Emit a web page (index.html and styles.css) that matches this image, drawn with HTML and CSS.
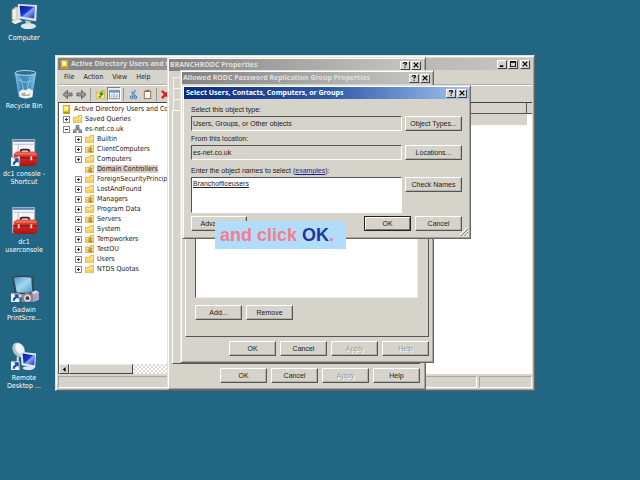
FILE: index.html
```html
<!DOCTYPE html>
<html lang="en">
<head>
<meta charset="utf-8">
<title>Active Directory Users and Computers</title>
<link rel="stylesheet" href="styles.css">
</head>
<body>
<svg class="defs" aria-hidden="true">
  <defs>
    <linearGradient id="screen" x1="0" y1="0" x2="1" y2="1"><stop offset="0" stop-color="#0a1c9c"/><stop offset=".45" stop-color="#1a35d8"/><stop offset=".55" stop-color="#8aa8f4"/><stop offset="1" stop-color="#1428b4"/></linearGradient>
    <linearGradient id="glass" x1="0" y1="0" x2="1" y2="1"><stop offset="0" stop-color="#4a98cc"/><stop offset=".5" stop-color="#a4d6f0"/><stop offset="1" stop-color="#4e9cd0"/></linearGradient>
    <linearGradient id="bin" x1="0" y1="0" x2="1" y2="0"><stop offset="0" stop-color="#8cc4e4"/><stop offset=".3" stop-color="#3a88b8"/><stop offset=".7" stop-color="#4a98c8"/><stop offset="1" stop-color="#9ccce8"/></linearGradient>
    <linearGradient id="red" x1="0" y1="0" x2="0" y2="1"><stop offset="0" stop-color="#ee5a4c"/><stop offset=".4" stop-color="#d42a24"/><stop offset="1" stop-color="#a81414"/></linearGradient>
    <symbol id="i-arrow" viewBox="0 0 9 9"><path fill="#f0f4fa" d="M0 0h9v9H0z"/><path fill="#1c4ca4" d="M3 1h5v5L6.500 4.500Q4 6 3.500 8L1.500 7.500Q2 4.500 4.700 2.800z"/></symbol>
    <symbol id="i-toolbox" viewBox="0 0 30 30"><path fill="#f4f6fa" stroke="#a4b0c4" d="M2.500 1.500h23v26h-23z"/><path fill="#5c84bc" d="M3 2h22v2H3z"/><path stroke="#b4bccb" d="M4 6.500h20M8.500 7v18"/><path fill="none" stroke="#33201c" stroke-width="2" d="M11 16v-2q0-2 2-2h5q2 0 2 2v2"/><path fill="url(#red)" d="M4 16l3-2h18l3 2v11l-3 2H5l-2-2z"/><path fill="#f48b7c" d="M5 16h22v1H5z"/><path stroke="#7c0c0c" d="M3 20.500h25"/><path fill="#ded6cc" d="M8 19h2v4H8zM21 19h2v4h-2z"/></symbol>
    <symbol id="i-folder" viewBox="0 0 10 10"><path fill="#e2b94c" d="M0 2h5l1-2h4v9H0z"/><path fill="#ffe48c" d="M1 3h5l1-2h2v7H1z"/><path fill="#f6d067" d="M1 5h8v3H1z"/></symbol>
    <symbol id="i-ou" viewBox="0 0 10 10"><use href="#i-folder"/><path fill="#8c6c20" d="M4 3h4v1H4zM3 5h2v1H3zM6 4h1v3H6zM4 7h4v1H4z"/></symbol>
    <symbol id="i-console" viewBox="0 0 10 10"><path fill="#d9a91c" d="M1 0h8v10H1z"/><path fill="#ffe75c" d="M2 1h5v6H2z"/><path fill="#fff9c4" d="M3 2h4v3H3z"/><path fill="#a88418" d="M2 8h6v1H2z"/></symbol>
    <symbol id="i-domain" viewBox="0 0 10 10"><path fill="#6b7c8c" d="M3 0h4v4H3zM0 5h4v4H0zM6 5h4v4H6z"/><path fill="#bed4e2" d="M4 1h2v1H4zM1 6h2v1H1zM7 6h2v1H7z"/><path stroke="#485868" d="M5 4v2M2 4.500h6"/></symbol>
    <symbol id="i-help" viewBox="0 0 7 7"><path fill="none" stroke="#000" stroke-width="1.300" d="M1.700 2V1.500Q1.700.7 3.500.7t1.800 1Q5.300 2.400 4.200 3 3.500 3.300 3.500 4.400"/><path d="M2.800 5.400h1.500v1.300H2.800z"/></symbol>
    <symbol id="i-close" viewBox="0 0 7 7"><path stroke="#000" stroke-width="1.400" d="M.8.8l5.400 5.400M6.200.8L.8 6.200"/></symbol>
  </defs>
</svg>

<main class="desktop">
  <nav class="shortcuts" aria-label="Desktop">
    <a class="shortcut" href="#"><svg viewBox="0 0 30 30"><path fill="#d8d6c6" stroke="#9c9c8c" stroke-width=".5" d="M2 8l4-3 4 1v13l-5 2-3-3z"/><path fill="#f4f2e4" d="M3 9l3-2v11l-3-1z"/><path fill="#dce4ec" d="M8 2l20 1-1 17-18-3z"/><path fill="url(#screen)" d="M10 4l16 1-1 12-14-2z"/><path fill="#b8c2cc" d="M16 19l5 1 1 4h-6z"/><ellipse cx="19" cy="25" rx="8" ry="3" fill="#dfe6ec"/><path fill="#eceae0" d="M1 20l9-2 3 2-8 3z"/></svg><span>Computer</span></a>
    <a class="shortcut" href="#"><svg viewBox="0 0 30 30"><path fill="url(#bin)" d="M5 3h22l-4 25q-7 3-14 0z"/><ellipse cx="16" cy="3" rx="11" ry="2.500" fill="#2c7094" stroke="#b4dcf0"/><path fill="#eef2f6" d="M9 23l4-3 3 1 4-2 4 3-1 6q-7 3-13 0z"/><path fill="#b9aaa0" d="M11 25l4-2 2 3 4-2-1 3h-7z"/><path fill="none" stroke="#a4d4ec" stroke-width=".8" d="M11 8l3 12M21 7l-3 12M9 10q7 5 14 1"/></svg><span>Recycle Bin</span></a>
    <a class="shortcut" href="#"><svg viewBox="0 0 30 30"><use href="#i-toolbox"/><use href="#i-arrow" x="1" y="20" width="9" height="9"/></svg><span>dc1 console - Shortcut</span></a>
    <a class="shortcut" href="#"><svg viewBox="0 0 30 30"><use href="#i-toolbox"/></svg><span>dc1 userconsole</span></a>
    <a class="shortcut" href="#"><svg viewBox="0 0 30 30"><path fill="#34454f" d="M2 3q10-3 22 0l1 17q-10 3-20 1z"/><path fill="url(#glass)" d="M4 4q9-2 18 0l1 14q-9 2-16 1z"/><path fill="#cfd6dc" d="M9 21h10v3H9z"/><path fill="#a9a4c6" d="M22 19l5-2 3 2v8l-6 2z"/><path fill="#dad5e4" d="M22 19l5-2 3 2-5 2z"/><path fill="#8a8890" d="M12 21h3l1-2h4l1 2h3v8H12z"/><circle cx="18" cy="25" r="3.500" fill="#e0dce4"/><circle cx="18" cy="25" r="2" fill="#4c3c50"/><use href="#i-arrow" x="1" y="20" width="9" height="9"/></svg><span>Gadwin PrintScre...</span></a>
    <a class="shortcut" href="#"><svg viewBox="0 0 30 30"><ellipse cx="9" cy="8" rx="6" ry="8" transform="rotate(-30 9 8)" fill="#b2c6d0"/><ellipse cx="10" cy="7" rx="4" ry="6" transform="rotate(-30 10 7)" fill="#eef6fa"/><path stroke="#dce4e8" stroke-width="2" d="M8 15v6"/><path fill="#e0e6ea" d="M11 10l16 2-1 15-14-3z"/><path fill="url(#screen)" d="M13 12l13 2-1 10-11-2z"/><ellipse cx="19" cy="27" rx="6" ry="2" fill="#dfe6ec"/><use href="#i-arrow" x="1" y="20" width="9" height="9"/></svg><span>Remote Desktop ...</span></a>
  </nav>

  <section class="window console" aria-label="Active Directory Users and Computers">
    <header class="titlebar inactive">
      <svg class="ico"><use href="#i-console"/></svg>
      <h1>Active Directory Users and Computers</h1>
      <button class="cap" aria-label="Minimize"><svg viewBox="0 0 7 7"><path d="M1 5h4v2H1z"/></svg></button>
      <button class="cap" aria-label="Maximize"><svg viewBox="0 0 7 7"><path d="M0 0h7v7H0zM1 2v4h5V2z" fill-rule="evenodd"/></svg></button>
      <button class="cap last" aria-label="Close"><svg><use href="#i-close"/></svg></button>
    </header>
    <nav class="menubar"><a href="#">File</a><a href="#">Action</a><a href="#">View</a><a href="#">Help</a></nav>
    <div class="toolbar">
      <button aria-label="Back"><svg viewBox="0 0 12 12"><path fill="#969696" stroke="#606060" d="M1 6l5-4.500v3h5v3H6v3z"/></svg></button>
      <button aria-label="Forward"><svg viewBox="0 0 12 12"><path fill="#969696" stroke="#606060" d="M11 6L6 1.500v3H1v3h5v3z"/></svg></button>
      <i class="sep"></i>
      <button aria-label="Up one level"><svg viewBox="0 0 12 12"><path fill="#dfb643" d="M1 3h5l1-2h4v10H1z"/><path fill="#fbe58d" d="M2 4h8v6H2z"/><path fill="none" stroke="#249c24" stroke-width="1.500" d="M4 9q3 0 3-4M5 6l2-2 2 2"/></svg></button>
      <button class="pressed" aria-label="Show tree"><svg viewBox="0 0 12 12"><path fill="#fff" stroke="#7088a4" d="M.5 1.500h11v9H.5z"/><path fill="#6a92cc" d="M1 2h10v2H1z"/><path stroke="#7c92b0" d="M5.500 4v6M2 6.500h2M2 8.500h2M7 6.500h3M7 8.500h3"/></svg></button>
      <i class="sep"></i>
      <button aria-label="Cut"><svg viewBox="0 0 12 12"><path stroke="#4a98d4" stroke-width="1.500" d="M8 1L5 7M4 3l4 5"/><circle cx="4" cy="9" r="1.500" fill="none" stroke="#1a64b4"/><circle cx="8" cy="9" r="1.500" fill="none" stroke="#1a64b4"/></svg></button>
      <button aria-label="Paste"><svg viewBox="0 0 12 12"><path fill="#9a6438" d="M2 2h8v9H2z"/><path fill="#fafafa" d="M3 3h6v7H3z"/><path fill="#6c6c6c" d="M4 1h4v2H4z"/></svg></button>
      <i class="sep"></i>
      <button aria-label="Delete"><svg viewBox="0 0 12 12"><path stroke="#dc1c1c" stroke-width="2.500" d="M1 2l8 8M9 2l-8 8"/></svg></button>
    </div>
    <div class="panes">
      <div class="treepane">
        <ul class="tree">
          <li class="l0"><svg class="ico"><use href="#i-console"/></svg><span>Active Directory Users and Computers</span></li>
          <li class="l1"><b class="box plus"></b><svg class="ico"><use href="#i-folder"/></svg><span>Saved Queries</span></li>
          <li class="l1"><b class="box"></b><svg class="ico"><use href="#i-domain"/></svg><span>es-net.co.uk</span></li>
          <li class="l2"><b class="box plus"></b><svg class="ico"><use href="#i-folder"/></svg><span>Builtin</span></li>
          <li class="l2"><b class="box plus"></b><svg class="ico"><use href="#i-ou"/></svg><span>ClientComputers</span></li>
          <li class="l2"><b class="box plus"></b><svg class="ico"><use href="#i-folder"/></svg><span>Computers</span></li>
          <li class="l2"><b class="box none"></b><svg class="ico"><use href="#i-ou"/></svg><span class="selected">Domain Controllers</span></li>
          <li class="l2"><b class="box plus"></b><svg class="ico"><use href="#i-folder"/></svg><span>ForeignSecurityPrincipals</span></li>
          <li class="l2"><b class="box plus"></b><svg class="ico"><use href="#i-folder"/></svg><span>LostAndFound</span></li>
          <li class="l2"><b class="box plus"></b><svg class="ico"><use href="#i-ou"/></svg><span>Managers</span></li>
          <li class="l2"><b class="box plus"></b><svg class="ico"><use href="#i-folder"/></svg><span>Program Data</span></li>
          <li class="l2"><b class="box plus"></b><svg class="ico"><use href="#i-ou"/></svg><span>Servers</span></li>
          <li class="l2"><b class="box plus"></b><svg class="ico"><use href="#i-folder"/></svg><span>System</span></li>
          <li class="l2"><b class="box plus"></b><svg class="ico"><use href="#i-ou"/></svg><span>Tempworkers</span></li>
          <li class="l2"><b class="box plus"></b><svg class="ico"><use href="#i-ou"/></svg><span>TestOU</span></li>
          <li class="l2"><b class="box plus"></b><svg class="ico"><use href="#i-folder"/></svg><span>Users</span></li>
          <li class="l2"><b class="box plus"></b><svg class="ico"><use href="#i-folder"/></svg><span>NTDS Quotas</span></li>
        </ul>
        <div class="scroll">
          <button aria-label="Scroll left"><svg viewBox="0 0 7 7"><path d="M5 0v7L1 3.500z"/></svg></button>
          <i class="thumb"></i>
        </div>
      </div>
      <div class="listpane"><div class="colhead"><i></i><i></i></div><div class="strip"></div></div>
    </div>
    <footer class="status"><i></i><i></i><i></i></footer>
  </section>

  <section class="window props" aria-label="BRANCHRODC Properties">
    <header class="titlebar inactive"><h2>BRANCHRODC Properties</h2>
      <button class="cap" aria-label="Help"><svg><use href="#i-help"/></svg></button>
      <button class="cap last" aria-label="Close"><svg><use href="#i-close"/></svg></button>
    </header>
    <div class="tabs"><i></i><i></i><i></i></div>
    <div class="page"></div>
    <div class="actions"><button class="btn">OK</button><button class="btn">Cancel</button><button class="btn" disabled>Apply</button><button class="btn">Help</button></div>
  </section>

  <section class="window group" aria-label="Allowed RODC Password Replication Group Properties">
    <header class="titlebar inactive"><h2>Allowed RODC Password Replication Group Properties</h2>
      <button class="cap" aria-label="Help"><svg><use href="#i-help"/></svg></button>
      <button class="cap last" aria-label="Close"><svg><use href="#i-close"/></svg></button>
    </header>
    <div class="page">
      <div class="members"></div>
      <div class="memberbtns"><button class="btn">Add...</button><button class="btn">Remove</button></div>
    </div>
    <div class="actions"><button class="btn">OK</button><button class="btn">Cancel</button><button class="btn" disabled>Apply</button><button class="btn" disabled>Help</button></div>
  </section>

  <section class="window picker" aria-label="Select Users, Contacts, Computers, or Groups">
    <header class="titlebar"><h2>Select Users, Contacts, Computers, or Groups</h2>
      <button class="cap" aria-label="Help"><svg><use href="#i-help"/></svg></button>
      <button class="cap last" aria-label="Close"><svg><use href="#i-close"/></svg></button>
    </header>
    <form class="form">
      <label for="type">Select this object type:</label>
      <input id="type" value="Users, Groups, or Other objects" readonly>
      <button class="btn" type="button">Object Types...</button>
      <label for="loc">From this location:</label>
      <input id="loc" value="es-net.co.uk" readonly>
      <button class="btn" type="button">Locations...</button>
      <p class="prompt"><label for="names">Enter the object names to select</label> (<a href="#">examples</a>):</p>
      <textarea id="names" spellcheck="false">Branchofficeusers</textarea>
      <button class="btn" type="button">Check Names</button>
      <div class="confirm"><button class="btn wide" type="button">Advanced...</button><button class="btn default" type="button">OK</button><button class="btn" type="button">Cancel</button></div>
    </form>
    <svg class="grip" viewBox="0 0 8 8"><path stroke="#fff" d="M0 7l7-7M3 8l5-5M6 8l2-2"/><path stroke="#808080" d="M1 8l7-7M4 8l4-4"/></svg>
  </section>

  <p class="caption">and click <strong>OK</strong>.</p>
</main>
</body>
</html>
```
FILE: styles.css
```css
* { box-sizing: border-box; }
body {
  margin: 0;
  background: #216682;
  font: 7px/8px "DejaVu Sans Condensed", "DejaVu Sans", sans-serif;
  color: #222;
}
h1, h2, p, ul { margin: 0; padding: 0; }
i, b { font-style: normal; }
a { color: inherit; text-decoration: none; }
button, input, textarea { margin: 0; font: inherit; color: inherit; border-radius: 0; }
button { padding: 0; }
svg { display: block; }
.defs { position: absolute; width: 0; height: 0; }
.desktop { position: relative; min-height: 100vh; overflow: hidden; }

/* Desktop shortcuts */
.shortcuts { display: grid; grid-auto-rows: 68px; width: 48px; padding-top: 2px; }
.shortcut { display: flex; flex-direction: column; align-items: center; gap: 3px; color: #fff; text-align: center; }
.shortcut > svg { width: 29px; height: 29px; }
.shortcut span { width: 44px; }

/* Window chrome */
.window {
  position: absolute;
  display: flex;
  flex-direction: column;
  background: #d6d3cb;
  border: 1px solid;
  border-color: #e4e2dc #666 #666 #e4e2dc;
  box-shadow: inset 1px 1px #fff, inset -1px -1px #a4a29c;
}
.titlebar {
  display: flex;
  align-items: center;
  height: 12px;
  padding: 0 2px;
  background: linear-gradient(90deg, #0a2c7c, #2c58a8 50%, #a2c4ee);
  color: #fff;
}
.titlebar.inactive { background: linear-gradient(90deg, #828282, #a0a0a0 40%, #c8c7c4); color: #e2dfd8; }
.titlebar h1, .titlebar h2 { flex: 1; overflow: hidden; white-space: nowrap; font: bold 7px/10px "Noto Sans", sans-serif; }
.cap {
  display: grid;
  place-items: center;
  width: 10px;
  height: 9px;
  background: #d6d3cb;
  border: 1px solid;
  border-color: #fff #444 #444 #fff;
}
.cap.last { margin-left: 1px; }
.cap svg { width: 6px; height: 6px; }
.ico { flex: none; width: 9px; height: 9px; }

/* Console */
.console { left: 55px; top: 55px; width: 480px; height: 336px; padding: 2px; }
.console .titlebar { gap: 1px; }
.console h1 { padding-left: 1px; }
.menubar { display: flex; align-items: center; gap: 9px; height: 15px; padding-left: 6px; border-bottom: 1px solid #b4b1aa; }
.toolbar { display: flex; align-items: center; height: 17px; padding: 0 2px; border-top: 1px solid #fff; }
.toolbar button { display: grid; place-items: center; width: 14px; height: 14px; background: none; border: 0; }
.toolbar svg { width: 11px; height: 11px; }
.toolbar .pressed { background: #ecebe6; border: 1px solid; border-color: #808080 #fff #fff #808080; }
.sep { width: 1px; height: 13px; margin: 0 2px; background: #999; }
.panes { display: flex; flex: 1; min-height: 0; border-top: 1px solid #444; border-left: 1px solid #555; }
.treepane { display: flex; flex-direction: column; width: 125px; background: #fff; }
.tree { flex: 1; padding-top: 1px; list-style: none; }
.tree li { display: flex; align-items: center; gap: 3px; height: 10px; white-space: nowrap; }
.l0 { padding-left: 3px; }
.l1 { padding-left: 4px; }
.l2 { padding-left: 16px; }
.tree .selected { background: #d4d1ca; }
.box {
  flex: none;
  width: 7px;
  height: 7px;
  border: 1px solid #8a8a8a;
  background: linear-gradient(#333, #333) center / 3px 1px no-repeat;
}
.plus { background: linear-gradient(#333, #333) center / 3px 1px no-repeat, linear-gradient(#333, #333) center / 1px 3px no-repeat; }
.none { visibility: hidden; }
.scroll { display: flex; height: 10px; background: repeating-conic-gradient(#dedbd5 0 25%, #fff 0 50%) 0 0 / 4px 4px; }
.scroll button, .thumb { background: #d6d3cb; border: 1px solid; border-color: #eee #444 #444 #eee; }
.scroll button { display: grid; place-items: center; width: 10px; }
.scroll button svg { width: 5px; height: 5px; }
.thumb { width: 64px; }
.listpane { flex: 1; background: #fff; }
.colhead { display: flex; height: 11px; background: #d6d3cb; border-bottom: 1px solid #555; }
.colhead i:first-child { flex: 1; border-right: 1px solid #555; }
.colhead i:last-child { width: 5px; }
.strip { height: 11px; margin-right: 5px; background: #d6d3cb; }
.status { display: flex; gap: 2px; height: 14px; padding-top: 2px; }
.status i { flex: 1; border: 1px solid; border-color: #aaa79f #fff #fff #aaa79f; }
.status i:last-child { flex: none; width: 53px; }

/* Shared dialog parts */
.btn {
  width: 47px;
  height: 15px;
  background: #d6d3cb;
  border: 1px solid;
  border-color: #fff #555 #555 #fff;
  box-shadow: inset -1px -1px #b4b1aa;
  font-family: "Liberation Sans", sans-serif;
  white-space: nowrap;
}
.btn:disabled { color: #999; text-shadow: 1px 1px #fff; }
.page { border: 1px solid; border-color: #fff #555 #555 #fff; }
.actions { display: flex; justify-content: flex-end; gap: 4px; padding-top: 4px; }

.props { left: 167px; top: 57px; width: 259px; height: 333px; padding: 1px 5px 6px 4px; }
.props .titlebar { margin: 0 -3px 0 -3px; padding-left: 1px; }
.props .page { flex: 1; }
.tabs { padding: 6px 3px 0 1px; }
.tabs i { display: block; height: 11px; border: 1px solid #f4f2ec; border-bottom: 0; }

.group { left: 180px; top: 70px; width: 254px; height: 293px; padding: 1px 4px 6px; }
.group .titlebar { margin: 0 -3px; padding-left: 1px; }
.group .page { display: flex; flex: 1; flex-direction: column; margin-top: 6px; padding: 8px 10px 16px 9px; }
.members { flex: 1; background: #fff; border: 1px solid; border-color: #555 #eee #eee #555; }
.memberbtns { display: flex; gap: 4px; padding-top: 7px; }

.picker { left: 182px; top: 85px; width: 289px; padding: 1px 1px 7px; }
.form {
  display: grid;
  grid-template-columns: 1fr 57px;
  column-gap: 3px;
  padding: 7px 7px 0;
  font-family: "Liberation Sans", sans-serif;
}
.form > label, .prompt { grid-column: 1 / -1; margin-bottom: 2px; }
.prompt { margin-top: 3px; }
.form > .btn { width: 57px; }
.form input, .form textarea {
  width: 100%;
  padding: 0 1px;
  background: #d6d3cb;
  border: 1px solid;
  border-color: #555 #fff #fff #555;
  outline: 0;
}
.form input { height: 15px; margin-bottom: 4px; }
.form textarea { height: 36px; padding: 2px 1px; background: #fff; resize: none; overflow: hidden; text-decoration: underline; }
.prompt a { color: #1c1c9c; text-decoration: underline; }
.confirm { display: flex; grid-column: 1 / -1; gap: 4px; margin-top: 3px; }
.confirm .wide { width: 56px; margin-right: auto; }
.btn.default { border-color: #222; box-shadow: inset 1px 1px #fff, inset -1px -1px #777; }
.grip { position: absolute; right: 2px; bottom: 2px; width: 8px; height: 8px; }

/* Narration caption */
.caption {
  position: absolute;
  left: 215px;
  top: 221px;
  padding: 0 12px 0 5px;
  background: #b2dcfc;
  color: #f0808a;
  font: bold 18px/28px "Liberation Sans", sans-serif;
  white-space: nowrap;
}
.caption strong { color: #24349c; }
```
